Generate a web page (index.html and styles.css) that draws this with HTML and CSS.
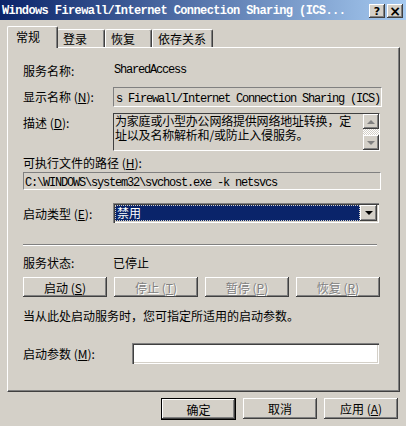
FILE: index.html
```html
<!DOCTYPE html>
<html lang="zh-CN">

<head>
	<meta charset="UTF-8">
	<title>服务属性</title>
	<link rel="stylesheet" href="styles.css">
</head>

<body>
	<div class="window">
		<div class="titlebar">
			<span class="title">Windows Firewall/Internet Connection Sharing (ICS...</span>
			<div class="caption-btns">
				<span class="cap-btn">?</span>
				<span class="cap-btn close">×</span>
			</div>
		</div>

		<div class="tabs">
			<div class="tab active">常规</div>
			<div class="tab t-login">登录</div>
			<div class="tab t-recover">恢复</div>
			<div class="tab t-deps">依存关系</div>
		</div>

		<div class="panel">
			<div class="row r-name">
				<span class="label">服务名称:</span>
				<span class="mono">SharedAccess</span>
			</div>
			<div class="row r-display">
				<span class="label">显示名称 (<u>N</u>):</span>
				<div class="field display-box"><span class="mono">s Firewall/Internet Connection Sharing (ICS)</span></div>
			</div>
			<div class="row r-desc">
				<span class="label">描述 (<u>D</u>):</span>
				<div class="field desc-box">
					<div class="desc-text">
						<div class="desc-line">为家庭或小型办公网络提供网络地址转换，定</div>
						<div class="desc-line">址以及名称解析和/或防止入侵服务。</div>
					</div>
					<div class="scrollbar">
						<span class="sb-btn"><span class="arrow up"></span></span>
						<span class="sb-track"></span>
						<span class="sb-btn"><span class="arrow down"></span></span>
					</div>
				</div>
			</div>
			<div class="row r-pathlabel">
				<span>可执行文件的路径 (<u>H</u>):</span>
			</div>
			<div class="field path-box"><span class="mono">C:\WINDOWS\system32\svchost.exe -k netsvcs</span></div>
			<div class="row r-type">
				<span class="label">启动类型 (<u>E</u>):</span>
				<div class="select">
					<div class="select-value"><span>禁用</span></div>
					<span class="sb-btn drop"><span class="arrow down"></span></span>
				</div>
			</div>
			<div class="separator"></div>
			<div class="row r-status">
				<span class="label">服务状态:</span>
				<span>已停止</span>
			</div>
			<div class="row r-buttons">
				<button class="btn wide">启动 (<u>S</u>)</button>
				<button class="btn wide" disabled>停止 (<u>T</u>)</button>
				<button class="btn wide" disabled>暂停 (<u>P</u>)</button>
				<button class="btn wide" disabled>恢复 (<u>R</u>)</button>
			</div>
			<div class="row r-hint">
				<span>当从此处启动服务时，您可指定所适用的启动参数。</span>
			</div>
			<div class="row r-param">
				<span class="label label-wide">启动参数 (<u>M</u>):</span>
				<div class="param-input"></div>
			</div>
		</div>

		<div class="footer">
			<button class="btn default">确定</button>
			<button class="btn">取消</button>
			<button class="btn">应用 (<u>A</u>)</button>
		</div>
	</div>
</body>

</html>
```

FILE: styles.css
```css
body {
	margin: 0;
	font-family: "Noto Sans CJK SC", "DejaVu Sans", sans-serif;
	font-size: 12px;
	color: #000;
}

u {
	text-decoration: underline;
	text-underline-offset: 1px;
}

.window {
	width: 406px;
	height: 426px;
	background: #d4d0c8;
	overflow: hidden;
}

/* barre de titre */
.titlebar {
	height: 20px;
	padding-top: 2px;
	box-sizing: border-box;
	display: flex;
	align-items: center;
	background: linear-gradient(to right, #0a246a, #a6caf0);
}

.title {
	flex: 1;
	padding-left: 2px;
	color: #fff;
	font-family: "Liberation Mono", monospace;
	font-weight: bold;
	font-size: 12px;
	letter-spacing: -0.6px;
	white-space: nowrap;
	overflow: hidden;
}

.caption-btns {
	display: flex;
	gap: 2px;
	padding-right: 3px;
	padding-left: 8px;
}

.cap-btn {
	width: 16px;
	height: 14px;
	box-sizing: border-box;
	display: flex;
	align-items: center;
	justify-content: center;
	background: #d4d0c8;
	box-shadow: inset -1px -1px #404040, inset 1px 1px #fff, inset -2px -2px #808080;
	font-family: "DejaVu Sans", sans-serif;
	font-weight: bold;
	font-size: 11px;
	line-height: 1;
}

.cap-btn.close {
	font-size: 14px;
}

/* onglets */
.tabs {
	height: 27px;
	display: flex;
	align-items: flex-end;
	padding-left: 7px;
}

.tab {
	height: 18px;
	box-sizing: border-box;
	padding-left: 5px;
	border-top: 1px solid #fff;
	border-left: 1px solid #fff;
	border-right: 1px solid #404040;
	box-shadow: inset -1px 0 #808080;
	border-radius: 2px 2px 0 0;
	line-height: 17px;
	white-space: nowrap;
}

.tab.active {
	width: 51px;
	height: 22px;
	padding-left: 8px;
	margin-bottom: -1px;
	margin-right: -1px;
	position: relative;
	z-index: 1;
	background: #d4d0c8;
	line-height: 20px;
}

.t-login {
	width: 48px;
}

.t-recover {
	width: 47px;
}

.t-deps {
	width: 61px;
}

/* panneau */
.panel {
	margin-left: 7px;
	width: 393px;
	height: 345px;
	box-sizing: border-box;
	padding-left: 15px;
	border-top: 1px solid #fff;
	border-left: 1px solid #fff;
	border-right: 1px solid #404040;
	border-bottom: 1px solid #404040;
	box-shadow: inset -1px -1px #808080;
}

.row {
	display: flex;
	align-items: center;
}

.label {
	width: 90px;
	flex-shrink: 0;
	white-space: nowrap;
}

.label-wide {
	width: 109px;
}

.mono {
	font-family: "Liberation Mono", monospace;
	font-size: 12px;
	letter-spacing: -1.2px;
	white-space: nowrap;
}

.field {
	box-sizing: border-box;
	border-top: 1px solid #808080;
	border-left: 1px solid #808080;
	border-right: 1px solid #fff;
	border-bottom: 1px solid #fff;
}

.r-name {
	margin-top: 12px;
	height: 20px;
}

.r-name .mono {
	padding-left: 1px;
}

.r-display {
	margin-top: 7px;
	height: 20px;
	align-items: flex-start;
}

.r-display .label {
	line-height: 20px;
}

.display-box {
	width: 269px;
	height: 20px;
	padding: 1px 0 0 2px;
	overflow: hidden;
	line-height: 15px;
}

.r-desc {
	margin-top: 6px;
	height: 38px;
	align-items: flex-start;
}

.r-desc .label {
	line-height: 20px;
}

.desc-box {
	width: 267px;
	height: 38px;
	display: flex;
	justify-content: space-between;
	border-top-color: #404040;
	border-left-color: #404040;
}

.desc-text {
	padding-left: 1px;
	letter-spacing: -0.2px;
	white-space: nowrap;
}

.desc-line {
	height: 14px;
	line-height: 14px;
}

.scrollbar {
	width: 16px;
	display: flex;
	flex-direction: column;
}

.sb-btn {
	width: 16px;
	height: 15px;
	box-sizing: border-box;
	display: flex;
	align-items: center;
	justify-content: center;
	background: #d4d0c8;
	box-shadow: inset -1px -1px #404040, inset 1px 1px #fff, inset -2px -2px #808080;
}

.sb-track {
	flex: 1;
	background: repeating-conic-gradient(#fff 0 25%, #d4d0c8 0 50%) 0 0 / 2px 2px;
}

.arrow {
	width: 0;
	height: 0;
	border-left: 4px solid transparent;
	border-right: 4px solid transparent;
}

.arrow.up {
	border-bottom: 4px solid #808080;
}

.arrow.down {
	border-top: 4px solid #808080;
}

.r-pathlabel {
	margin-top: 3px;
	height: 16px;
}

.path-box {
	margin-top: 2px;
	width: 358px;
	height: 18px;
	padding-left: 1px;
	line-height: 15px;
}

.r-type {
	margin-top: 13px;
	height: 20px;
}

.select {
	width: 266px;
	height: 20px;
	box-sizing: border-box;
	display: flex;
	align-items: center;
	padding: 2px;
	background: #fff;
	box-shadow: inset 1px 1px #808080, inset 2px 2px #404040, inset -1px -1px #fff, inset -2px -2px #d4d0c8;
}

.select-value {
	flex: 1;
	height: 16px;
	box-sizing: border-box;
	background: #0a246a;
	color: #fff;
	outline: 1px dotted #d4d0c8;
	outline-offset: -1px;
	line-height: 15px;
	padding-left: 2px;
}

.drop {
	width: 17px;
	height: 16px;
}

.drop .arrow.down {
	border-top-color: #000;
}

.separator {
	margin-top: 21px;
	width: 354px;
	height: 1px;
	background: #808080;
	border-bottom: 1px solid #fff;
}

.r-status {
	margin-top: 8px;
	height: 16px;
}

.r-buttons {
	margin-top: 7px;
	gap: 7px;
}

.btn {
	height: 21px;
	width: 74px;
	padding: 0;
	border: none;
	background: #d4d0c8;
	font-family: "Noto Sans CJK SC", "DejaVu Sans", sans-serif;
	font-size: 12px;
	color: #000;
	box-shadow: inset -1px -1px #404040, inset 1px 1px #fff, inset -2px -2px #808080;
}

.btn.wide {
	width: 84px;
	height: 20px;
}

.btn:disabled {
	color: #808080;
	text-shadow: 1px 1px #fff;
}

.btn.default {
	border: 1px solid #000;
	width: 75px;
	height: 22px;
}

.r-hint {
	margin-top: 10px;
	height: 16px;
}

.r-param {
	margin-top: 20px;
	height: 21px;
}

.param-input {
	width: 247px;
	height: 21px;
	box-sizing: border-box;
	background: #fff;
	box-shadow: inset 1px 1px #808080, inset 2px 2px #404040, inset -1px -1px #fff, inset -2px -2px #d4d0c8;
}

/* boutons du bas */
.footer {
	display: flex;
	justify-content: flex-end;
	gap: 7px;
	padding-right: 8px;
	margin-top: 6px;
}
```
